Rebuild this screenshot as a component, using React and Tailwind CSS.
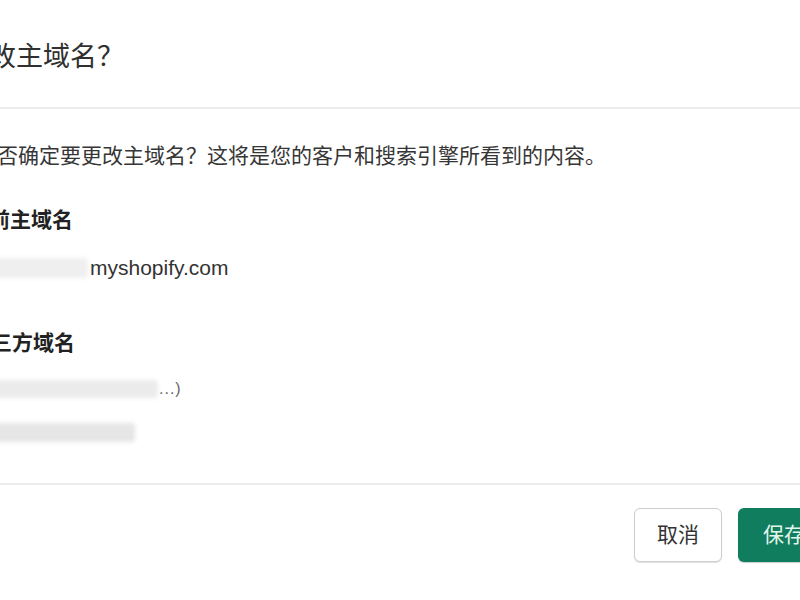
export default function App() {
  const font = { fontFamily: "'Liberation Sans','Noto Sans CJK SC',sans-serif" };
  return (
    <div className="w-[800px] h-[600px] overflow-hidden bg-white" style={font}>
      <div className="ml-[-32px] w-[862px]">
        {/* header */}
        <div className="pt-[41px] pb-[33px] border-b-2 border-[#ececec]">
          <h1 className="ml-[-6px] text-[27px] leading-[33px] font-normal text-[#303030]">更改主域名？</h1>
        </div>
        {/* body */}
        <div className="pt-[33px] pb-[37px] border-b-2 border-[#ececec]">
          <p className="ml-[-13px] text-[21px] leading-[28px] text-[#363636]">
            您是否确定要更改主域名？这将是您的客户和搜索引擎所看到的内容。
          </p>
          <div className="mt-[36px] text-[21px] leading-[28px] font-bold text-[#222]">当前主域名</div>
          <div className="mt-[20px] flex items-center h-[28px]">
            <div className="relative w-[120px] h-[20px] bg-[#efefef] blur-[2px] rounded-sm" />
            <span className="ml-[2px] text-[21px] leading-[28px] text-[#333]">myshopify.com</span>
          </div>
          <div className="mt-[47px] ml-[2px] text-[21px] leading-[28px] font-bold text-[#222]">第三方域名</div>
          <div className="mt-[18px] flex items-center h-[28px]">
            <div className="w-[190px] h-[18px] bg-[#ebebeb] blur-[2px] rounded-sm" />
            <span className="ml-[1px] text-[16px] leading-[20px] text-[#666] tracking-[1px]">...)</span>
          </div>
          <div className="mt-[15px] flex items-center h-[28px]">
            <div className="w-[167px] h-[19px] bg-[#e6e6e6] blur-[2px] rounded-sm" />
            <span className="ml-[-6px] mt-[8px] w-[3px] h-[3px] rounded-full bg-[#888]" />
          </div>
        </div>
        {/* footer */}
        <div className="pt-[23px] flex justify-end gap-4">
          <button className="w-[88px] h-[54px] rounded-[6px] border border-[#c9ced3] bg-white shadow-[0_1px_1px_rgba(0,0,0,0.12)] text-[21px] text-[#333]">
            取消
          </button>
          <button className="h-[54px] px-[25px] rounded-[6px] bg-[#107d5e] text-[21px] text-[#e3f6ec] shadow-[0_1px_1px_rgba(0,0,0,0.2)]">
            保存
          </button>
        </div>
      </div>
    </div>
  );
}
